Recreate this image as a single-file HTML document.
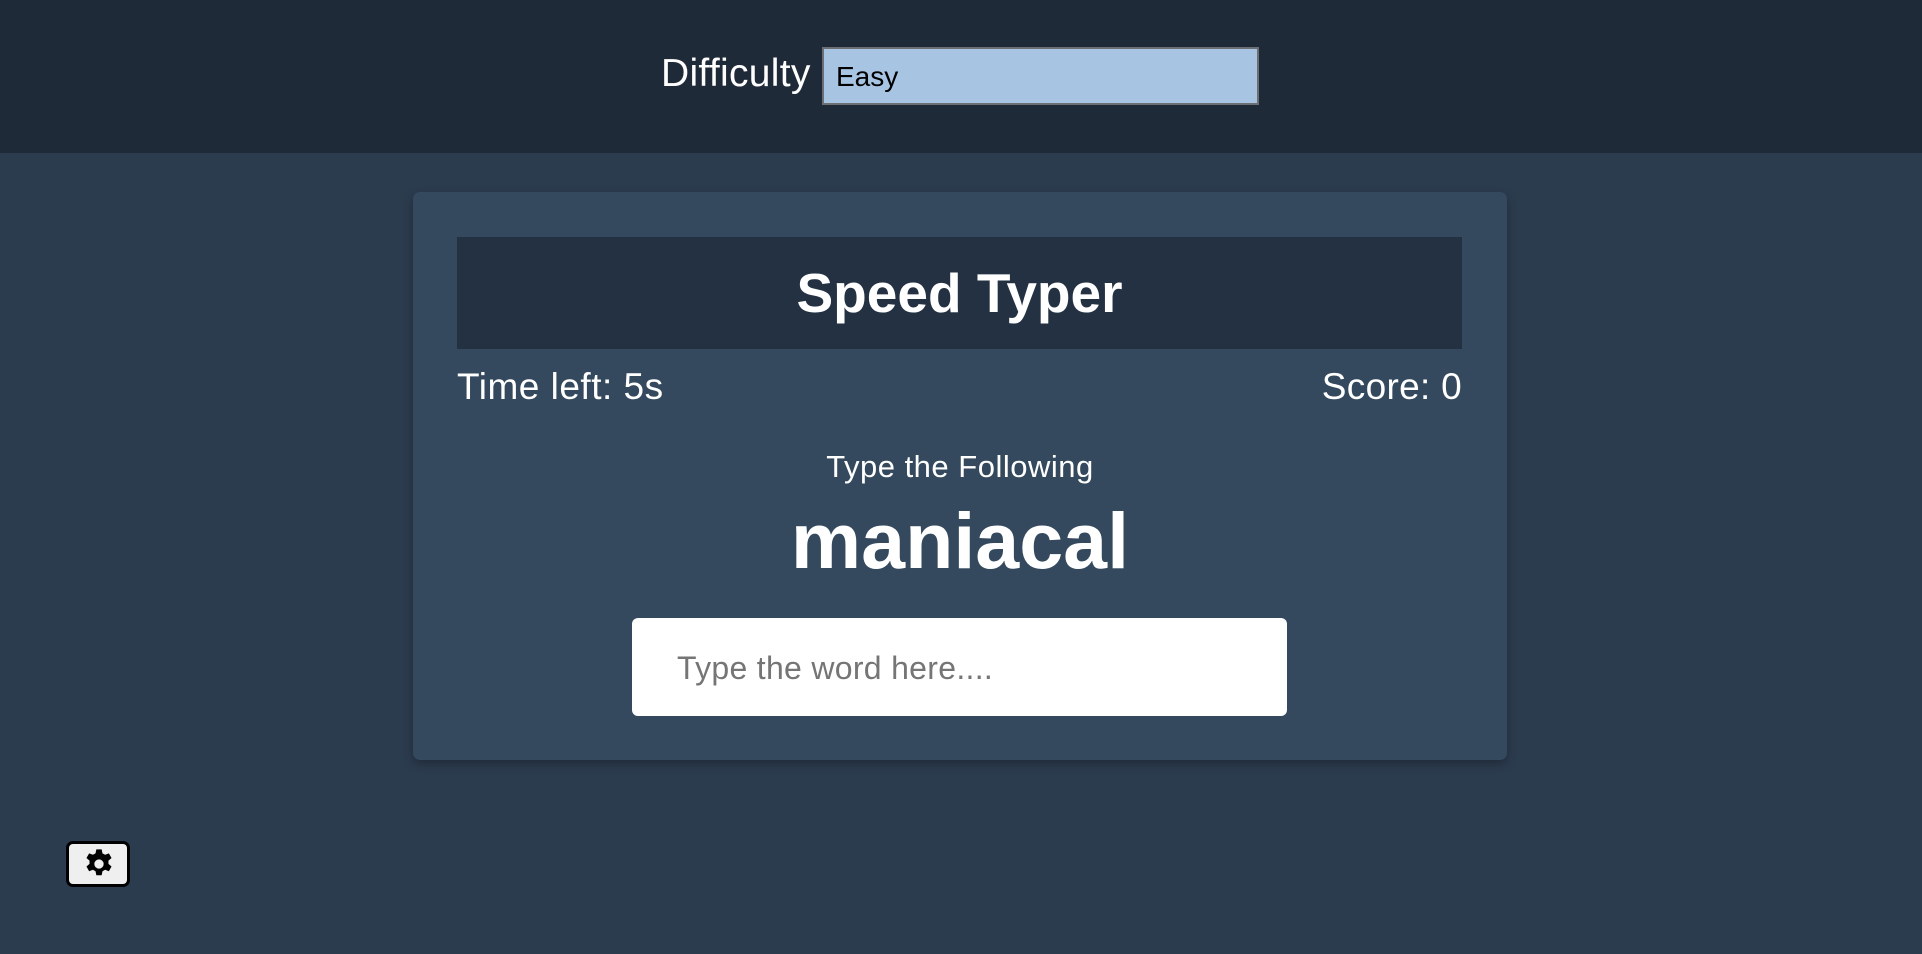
<!DOCTYPE html>
<html><head><meta charset="utf-8"><style>
*{box-sizing:border-box;margin:0;padding:0}
html,body{width:1922px;height:954px;overflow:hidden;background:#2c3c4f;font-family:"Liberation Sans",sans-serif;color:#fff}
.hdr{position:absolute;left:0;top:0;width:1922px;height:153px;background:#1f2a38}
.dl{position:absolute;left:661px;top:51px;font-size:39px;line-height:46px;letter-spacing:.3px}
.sel{position:absolute;left:822px;top:47px;width:437px;height:58px;background:#a7c4e3;border:2px solid #6b6f74;color:#000;font-size:28px;line-height:56px;padding-left:12px}
.card{position:absolute;left:413px;top:192px;width:1094px;height:568px;background:#34495e;border-radius:7px;box-shadow:0 4px 10px rgba(0,0,0,.3)}
.title{position:absolute;left:44px;top:45px;width:1005px;height:112px;background:#233142;text-align:center;font-weight:bold;font-size:55px;line-height:112px}
.tl{position:absolute;left:44px;top:173px;font-size:37px;line-height:44px;letter-spacing:.5px}
.sc{position:absolute;right:45px;top:173px;font-size:37px;line-height:44px;letter-spacing:.3px}
.tf{position:absolute;left:0;width:100%;top:256px;text-align:center;font-size:31px;line-height:38px;letter-spacing:.5px}
.w{position:absolute;left:0;width:100%;top:304px;text-align:center;font-size:79px;font-weight:bold;line-height:90px}
.inp{position:absolute;left:219px;top:426px;width:655px;height:98px;background:#fff;border-radius:6px;color:#757575;font-size:32px;line-height:100px;padding-left:45px;letter-spacing:.3px}
.gear{position:absolute;left:66px;top:841px;width:64px;height:46px;background:#efefef;border:3px solid #000;border-radius:7px}
.gear svg{position:absolute;left:14px;top:4px}
</style></head><body>
<div class="hdr"><div class="dl">Difficulty</div><div class="sel">Easy</div></div>
<div class="card">
<div class="title">Speed Typer</div>
<div class="tl">Time left: 5s</div>
<div class="sc">Score: 0</div>
<div class="tf">Type the Following</div>
<div class="w">maniacal</div>
<div class="inp">Type the word here....</div>
</div>
<div class="gear"><svg width="32" height="32" viewBox="0 0 24 24"><path fill="#000" fill-rule="evenodd" d="M10 1h4l.6 3 2 1.1 2.8-1.1 2 3.5-2.3 2 0 2.4 2.3 2-2 3.5-2.8-1.1-2 1.1-.6 3h-4l-.6-3-2-1.1-2.8 1.1-2-3.5 2.3-2V9.5l-2.3-2 2-3.5 2.8 1.1 2-1.1zM12 8.5a3.5 3.5 0 1 0 0 7 3.5 3.5 0 0 0 0-7z"/></svg></div>
</body></html>
